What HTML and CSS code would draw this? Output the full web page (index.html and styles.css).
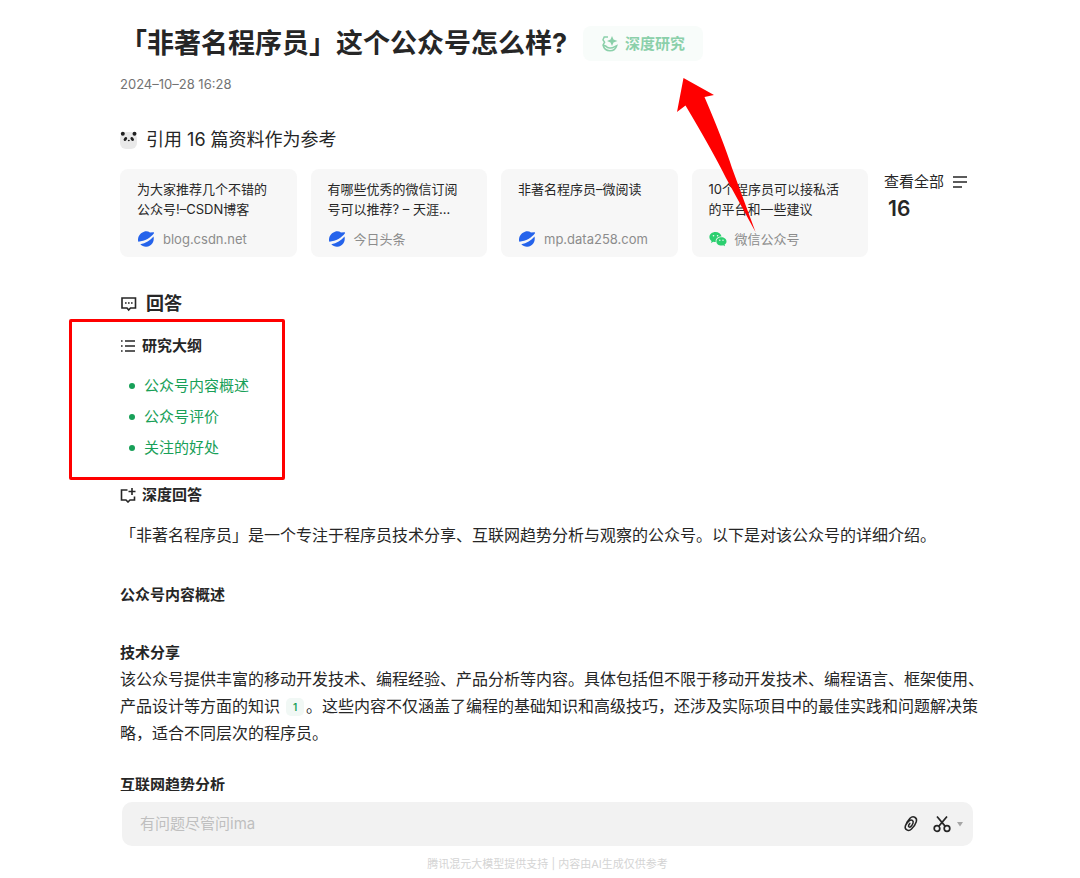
FILE: index.html
```html
<!DOCTYPE html>
<html lang="zh-CN">
<head>
<meta charset="utf-8">
<meta name="viewport" content="width=device-width, initial-scale=1">
<title>「非著名程序员」这个公众号怎么样?</title>
<link rel="stylesheet" href="styles.css">
</head>
<body>
<svg class="symbols" aria-hidden="true">
  <symbol id="planet" viewBox="0 0 18 18">
    <path fill="#2563eb" d="M1.300 11.800C.2 7.500 2.600 3 7 1.700c2.300-.7 4.300-.3 6 .7l3.300-.1c.7 0 1 .6.500 1.300C13.900 7.500 8 11.300 1.300 11.800z"/>
    <path fill="#2563eb" d="M3.300 14.200c5.200-1.100 10-4 13.200-7.800 1.300 5-2.200 10-7.200 10.300-2.400.1-4.500-.9-6-2.500z"/>
  </symbol>
</svg>
<main class="page">
  <header class="topic">
    <h1>「非著名程序员」这个公众号怎么样?</h1>
    <button class="research" type="button">
      <svg width="18" height="18" viewBox="0 0 18 18" fill="none" stroke="currentColor" stroke-width="1.500" aria-hidden="true">
        <path d="M7 2H3.200L2 4.800l1.600 2.400L2 10c.8 3.600 3.500 5.700 7 5.700 3.400 0 5.800-1.900 6.700-5l-2.400 1.200M2 10l3 1.200c1.500 2 5.500 2.600 8.300.7"/>
        <path fill="currentColor" stroke="none" d="M11 1l1.500 3.500L16.500 6l-4 1.500L11 11 9.500 7.500 6 6l3.500-1.500z"/>
      </svg>
      <span>深度研究</span>
    </button>
    <svg class="arrow" width="79" height="155" viewBox="0 0 79 155" aria-hidden="true">
      <path fill="#f00" d="M6.500 0L37 17l-9.500 2Q46 62 55 90L78.500 154 49 100Q35 72 8.500 27.500L0 34z"/>
    </svg>
  </header>
  <time class="date" datetime="2024-10-28T16:28">2024–10–28 16:28</time>

  <h2 class="refs-title">
    <svg width="18" height="18" viewBox="0 0 18 18" aria-hidden="true">
      <rect x="0" y="1" width="17" height="17" rx="6" fill="#e9e9e9"/>
      <g fill="#222"><circle cx="2.800" cy="2.700" r="2"/><circle cx="14.500" cy="2.700" r="2"/>
      <ellipse cx="5.400" cy="8" rx="1.500" ry="2.200" transform="rotate(35 5.400 8)"/>
      <ellipse cx="12.200" cy="8" rx="1.500" ry="2.200" transform="rotate(-35 12.200 8)"/>
      <ellipse cx="8.800" cy="9.500" rx="1" ry=".8"/></g>
    </svg>
    <span>引用 16 篇资料作为参考</span>
  </h2>
  <section class="refs">
    <div class="cards">
      <a class="card" href="#"><span class="card-title">为大家推荐几个不错的公众号!–CSDN博客</span>
        <span class="source"><svg width="18" height="18" aria-hidden="true"><use href="#planet"/></svg>blog.csdn.net</span></a>
      <a class="card" href="#"><span class="card-title">有哪些优秀的微信订阅号可以推荐? – 天涯…</span>
        <span class="source"><svg width="18" height="18" aria-hidden="true"><use href="#planet"/></svg>今日头条</span></a>
      <a class="card" href="#"><span class="card-title">非著名程序员–微阅读</span>
        <span class="source"><svg width="18" height="18" aria-hidden="true"><use href="#planet"/></svg>mp.data258.com</span></a>
      <a class="card" href="#"><span class="card-title">10个程序员可以接私活的平台和一些建议</span>
        <span class="source"><svg width="18" height="18" viewBox="0 0 18 18" aria-hidden="true">
          <path fill="#2bcf6f" d="M6.500 2C3 2 .4 4.300.4 7.100c0 1.600.9 3 2.200 4L2 13l2.300-1.200c.8.200 1.600.3 2.500.3C6.100 8.700 9 6.300 12.600 6.500 12 3.800 9.500 2 6.500 2z"/>
          <path fill="#2bcf6f" d="M12.400 7.200c-2.800 0-5 1.900-5 4.200s2.200 4.200 5 4.200c.6 0 1.200-.1 1.700-.3l1.900 1-.4-1.700c1.200-.8 1.900-1.900 1.900-3.200 0-2.300-2.300-4.200-5.100-4.200z"/>
          <g fill="#f7f7f7"><circle cx="4.500" cy="5.700" r=".8"/><circle cx="8.600" cy="5.700" r=".8"/><circle cx="10.800" cy="10.300" r=".7"/><circle cx="14" cy="10.300" r=".7"/></g>
        </svg>微信公众号</span></a>
    </div>
    <button class="view-all" type="button">
      <span class="view-label">查看全部
        <svg width="16" height="14" viewBox="0 0 16 14" stroke="#262626" stroke-width="1.600" aria-hidden="true"><path d="M1 2h14M1 7h14M1 12h9"/></svg>
      </span>
      <strong>16</strong>
    </button>
  </section>

  <h2 class="answer-title">
    <svg width="18" height="18" viewBox="0 0 18 18" fill="none" stroke="#262626" stroke-width="1.600" aria-hidden="true">
      <path d="M2 3h13.500v10H10.500L8.700 15 7 13H2z"/><path stroke-dasharray="1.600 1.400" d="M5 8h7.600"/>
    </svg>
    <span>回答</span>
  </h2>

  <section class="outline">
    <h3 class="label">
      <svg width="16" height="16" viewBox="0 0 16 16" stroke="#262626" stroke-width="1.400" aria-hidden="true">
        <path d="M5 3h10M5 8h10M5 13h10M1 3h1.600M1 8h1.600M1 13h1.600"/></svg>
      <span>研究大纲</span>
    </h3>
    <ul>
      <li><a href="#overview">公众号内容概述</a></li>
      <li><a href="#review">公众号评价</a></li>
      <li><a href="#benefit">关注的好处</a></li>
    </ul>
  </section>

  <h3 class="label deep">
    <svg width="16" height="16" viewBox="0 0 16 16" fill="none" stroke="#262626" stroke-width="1.600" aria-hidden="true">
      <path d="M7.500 3H1.500v10H6l2 2 2-2h4.500V9.500"/><path d="M12 1v7M8.500 4.500h7"/></svg>
    <span>深度回答</span>
  </h3>
  <article class="prose">
    <p>「非著名程序员」是一个专注于程序员技术分享、互联网趋势分析与观察的公众号。以下是对该公众号的详细介绍。</p>
    <h3 id="overview">公众号内容概述</h3>
    <h4>技术分享</h4>
    <p>该公众号提供丰富的移动开发技术、编程经验、产品分析等内容。具体包括但不限于移动开发技术、编程语言、框架使用、产品设计等方面的知识<a class="cite" href="#">1</a>。这些内容不仅涵盖了编程的基础知识和高级技巧&#65292;还涉及实际项目中的最佳实践和问题解决策略&#65292;适合不同层次的程序员。</p>
    <h4 class="next">互联网趋势分析</h4>
  </article>
</main>

<footer class="dock">
  <form class="ask">
    <input type="text" aria-label="提问" placeholder="有问题尽管问ima">
    <button type="button" aria-label="添加附件">
      <svg width="16" height="18" viewBox="0 0 16 18" fill="none" stroke="#262626" stroke-width="1.500" stroke-linecap="round" aria-hidden="true">
        <path d="M3.800 7.400L7 3.300C10 .3 14.600 2.400 13.300 6.700c-.7 2.300-2.800 5.400-4.800 7.300-3 2.900-7.400.7-6.100-3.200.7-2 2.400-4 4-5.200 2.200-1.500 4.500.2 3.600 2.600-.5 1.300-1.300 2.500-2.200 3.400-1.200 1.200-2.700.2-2.200-1.200.3-.8.700-1.400 1.200-2"/></svg>
    </button>
    <button class="clip" type="button" aria-label="截图">
      <svg width="18" height="18" viewBox="0 0 18 18" fill="none" stroke="#262626" stroke-width="1.700" aria-hidden="true">
        <circle cx="4" cy="13.500" r="2.800"/><circle cx="14" cy="13.500" r="2.800"/><path d="M4 1.500l8.300 9.900M14 1.500l-8.300 9.900"/></svg>
      <svg width="6" height="5" viewBox="0 0 6 5" aria-hidden="true"><path fill="#a6a6a6" d="M0 0h6L3 4.500z"/></svg>
    </button>
  </form>
  <p class="notice">腾讯混元大模型提供支持 | 内容由AI生成仅供参考</p>
</footer>
</body>
</html>
```

FILE: styles.css
```css
*, *::before, *::after { box-sizing: border-box; }
body {
  margin: 0;
  height: 100vh;
  display: flex;
  flex-direction: column;
  background: #fff;
  color: #262626;
  font: 16px/24px Inter, "Noto Sans CJK SC", sans-serif;
}
h1, h2, h3, h4, p, ul { margin: 0; padding: 0; }
button { border: 0; padding: 0; background: none; font: inherit; color: inherit; cursor: pointer; }
a { text-decoration: none; color: inherit; }
svg { flex: none; display: block; }
.symbols { position: absolute; width: 0; height: 0; }

.page {
  flex: 1;
  min-height: 0;
  overflow: auto;
  scrollbar-width: none;
  padding: 26px 92px 0 120px;
}
.topic { position: relative; display: flex; align-items: center; gap: 16px; }
h1 { font-size: 27px; line-height: 35px; font-weight: 700; }
.research {
  display: flex;
  align-items: center;
  gap: 6px;
  height: 35px;
  padding: 0 18px;
  border-radius: 8px;
  background: #f8fcfa;
  color: #8bd0aa;
  font-size: 15px;
  font-weight: 600;
}
.arrow { position: absolute; left: 557px; top: 52px; pointer-events: none; }
.date { display: block; margin-top: 13px; font-size: 13px; line-height: 20px; color: #737373; }

.refs-title, .answer-title { display: flex; align-items: center; gap: 8px; font-size: 18px; line-height: 24px; }
.refs-title { margin-top: 34px; font-weight: 400; }
.answer-title { margin-top: 35px; font-weight: 700; }
.refs { display: flex; align-items: flex-start; gap: 16px; margin-top: 17px; }
.cards { flex: 1; display: grid; grid-template-columns: repeat(4, 1fr); gap: 14px; }
.card {
  display: flex;
  flex-direction: column;
  justify-content: space-between;
  height: 88px;
  padding: 10px 17px 8px;
  border-radius: 8px;
  background: #f7f7f7;
  font-size: 13px;
  line-height: 20px;
}
.source { display: flex; align-items: center; gap: 8px; color: #8c8c8c; }
.view-all { width: 104px; display: flex; flex-direction: column; align-items: flex-start; }
.view-label { display: flex; align-items: center; gap: 8px; font-size: 15px; line-height: 26px; }
.view-all strong { padding-left: 4px; font-size: 21px; line-height: 28px; font-weight: 600; }

.outline { position: relative; margin-top: 18px; }
.outline::after {
  content: "";
  position: absolute;
  left: -51px;
  top: -15px;
  width: 216px;
  height: 161px;
  border: 3px solid #f00;
  border-radius: 2px;
  pointer-events: none;
}
.label { display: flex; align-items: center; gap: 6px; font-size: 15px; font-weight: 600; }
.outline ul { list-style: none; margin-top: 12px; color: #18a058; font-size: 15px; line-height: 31px; }
.outline li { display: flex; align-items: center; gap: 9px; padding-left: 9px; }
.outline li::before { content: ""; width: 6px; height: 6px; border-radius: 50%; background: currentColor; }
.deep { margin-top: 20px; }

.prose p { line-height: 27px; }
.prose > p:first-child { margin-top: 15px; }
.prose h3, .prose h4 { margin-top: 34px; font-size: 15px; line-height: 24px; font-weight: 700; }
.prose h4 + p { margin-top: 1px; }
.prose .next { margin-top: 26px; }
.cite {
  display: inline-block;
  width: 18px;
  margin: 0 2px 0 6px;
  border-radius: 5px;
  background: #f1f8f5;
  color: #18a058;
  font-size: 10px;
  line-height: 18px;
  font-weight: 600;
  text-align: center;
  vertical-align: 1px;
}

.dock { padding: 11px 107px 4px 122px; }
.ask { display: flex; align-items: center; gap: 14px; height: 44px; padding: 0 10px 0 18px; border-radius: 10px; background: #f2f2f2; }
.ask input { flex: 1; min-width: 0; border: 0; padding: 0; outline: 0; background: none; font: inherit; font-size: 15px; color: #262626; }
.ask input::placeholder { color: #bfbfbf; }
.clip { display: flex; align-items: center; gap: 6px; }
.notice { margin-top: 8px; font-size: 11px; line-height: 20px; color: #d4d4d4; text-align: center; }
```
